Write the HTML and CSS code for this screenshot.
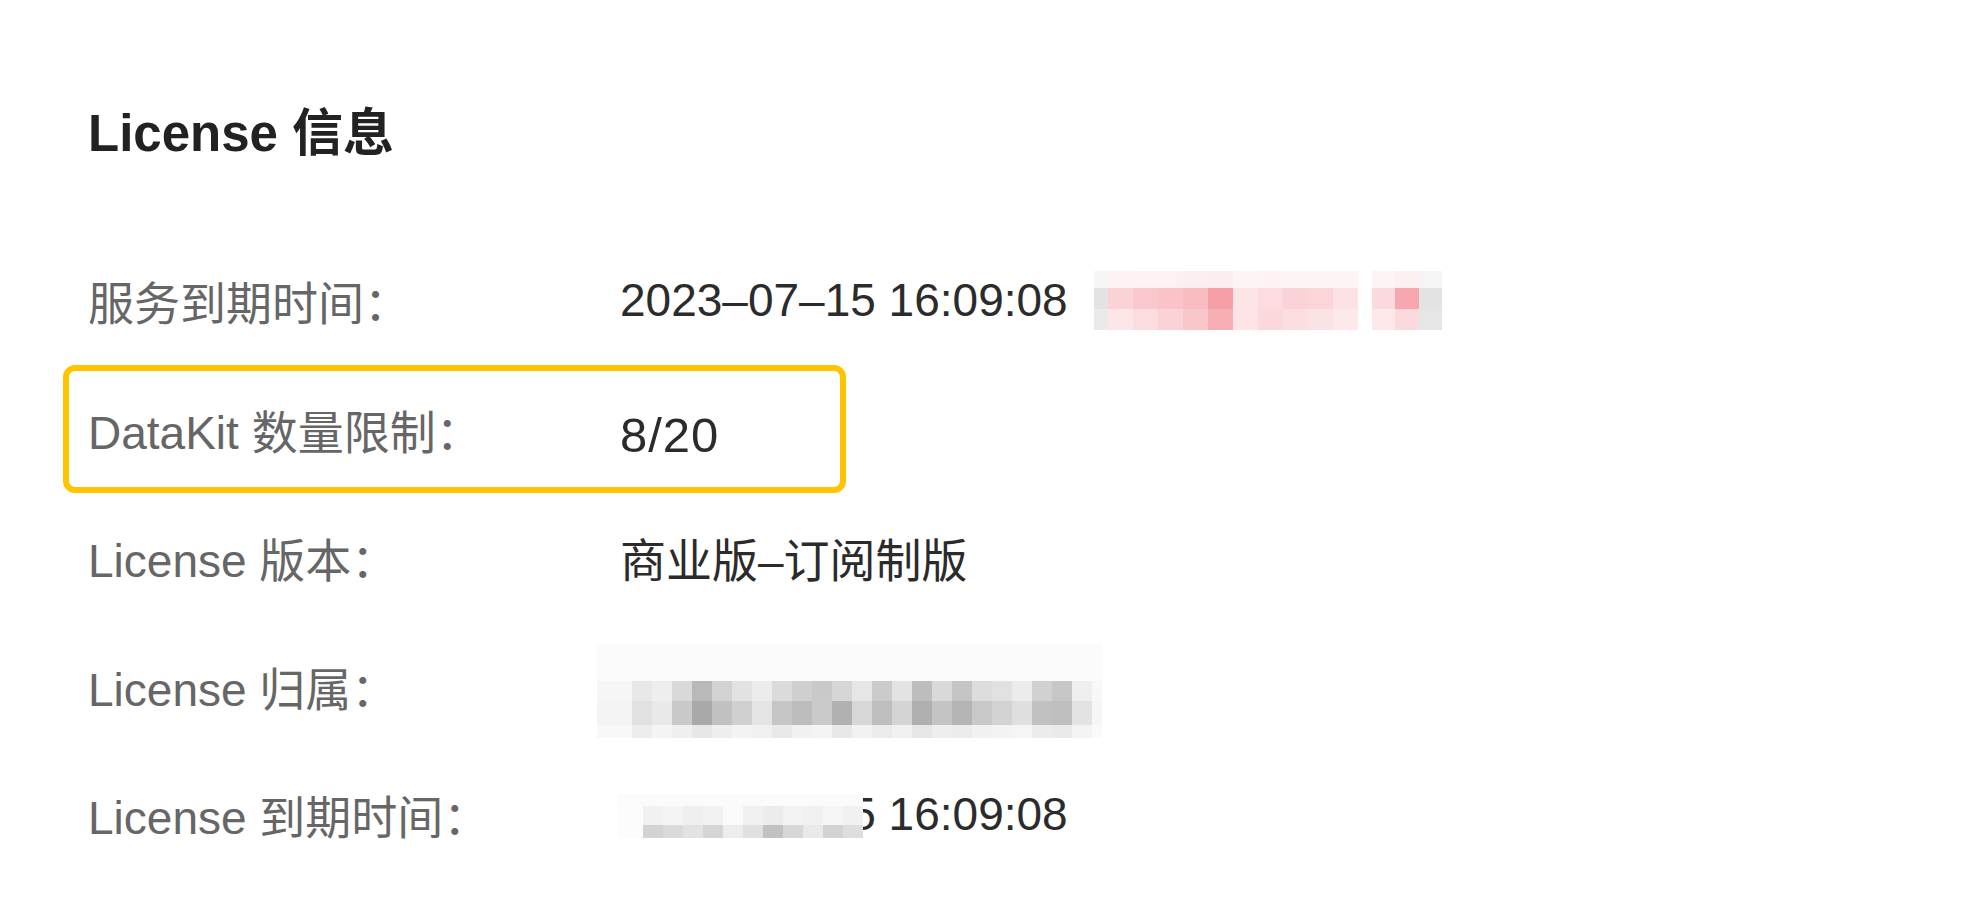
FILE: index.html
```html
<!DOCTYPE html>
<html lang="zh-CN">
<head>
    <meta charset="UTF-8">
    <meta name="viewport" content="width=device-width, initial-scale=1.0">
    <title>License 信息</title>
    <link rel="stylesheet" href="styles.css">
</head>
<body>
    <div class="license-panel">
        <h1 class="panel-title">License 信息</h1>

        <div class="info-row">
            <span class="info-label">服务到期时间：</span>
            <span class="info-value">
                2023–07–15 16:09:08
                <span class="mosaic mosaic-owner-tag" id="mosaicTag"></span>
            </span>
        </div>
        <div class="info-row highlighted">
            <span class="info-label">DataKit 数量限制：</span>
            <span class="info-value count">8/20</span>
        </div>
        <div class="info-row">
            <span class="info-label">License 版本：</span>
            <span class="info-value">商业版–订阅制版</span>
        </div>
        <div class="info-row">
            <span class="info-label">License 归属：</span>
            <span class="info-value">
                <span class="mosaic mosaic-owner" id="mosaicOwner"></span>
            </span>
        </div>
        <div class="info-row">
            <span class="info-label">License 到期时间：</span>
            <span class="info-value">
                2023–07–15 16:09:08
                <span class="mosaic mosaic-date" id="mosaicDate"></span>
            </span>
        </div>
    </div>

    <script>
        // blurred (pixelated) areas, one colour per cell, row by row
        const mosaics = {
            mosaicTag: [
                ['#f6f6f6','#fdf3f4','#fdf1f2','#fdf1f2','#fcefef','#fcedee','#fdf4f5','#fdf3f4','#fdf4f5','#fdf5f5','#fdf4f5','#ffffff','#fdf4f5','#fcf0f1','#f5f5f5'],
                ['#e4e2e2','#fbd3d6','#fac8cc','#f9c3c8','#f8bcc1','#f5a0a7','#fde4e6','#fcdcdf','#fbd2d5','#fbd5d8','#fde2e4','#ffffff','#fbdadd','#f6a8ae','#e3e3e3'],
                ['#ebe9e9','#fde6e8','#fbdde0','#fad3d6','#f9c6ca','#f7afb5','#fde3e5','#fbd8db','#fcdee0','#fbe2e4','#fde8ea','#ffffff','#fde8ea','#fbd9dc','#e6e6e6']
            ],
            mosaicOwner: [
                Array(25).fill('#fbfbfb'),
                ['#f6f6f6','#e8e8e8','#eeeeee','#d9d9d9','#b9b9b9','#d2d2d2','#e2e2e2','#ececec','#dbdbdb','#cfcfcf','#c9c9c9','#d6d6d6','#e6e6e6','#cbcbcb','#e3e3e3','#bdbdbd','#d9d9d9','#c5c5c5','#dddddd','#e1e1e1','#ececec','#d1d1d1','#c7c7c7','#efefef','#f8f8f8'],
                ['#f4f4f4','#e1e1e1','#e9e9e9','#c9c9c9','#a9a9a9','#c1c1c1','#d0d0d0','#e5e5e5','#c6c6c6','#bdbdbd','#cacaca','#b1b1b1','#d7d7d7','#bebebe','#d4d4d4','#afafaf','#c4c4c4','#b5b5b5','#c9c9c9','#d3d3d3','#dfdfdf','#c1c1c1','#bfbfbf','#e3e3e3','#f6f6f6'],
                ['#f8f8f8','#ededed','#f4f4f4','#efefef','#e7e7e7','#eeeeee','#f3f3f3','#f0f0f0','#e9e9e9','#f1f1f1','#f4f4f4','#e8e8e8','#f2f2f2','#ebebeb','#f0f0f0','#e6e6e6','#eeeeee','#ebebeb','#f1f1f1','#f3f3f3','#f5f5f5','#ececec','#eaeaea','#f4f4f4','#fafafa']
            ],
            mosaicDate: [
                Array(12).fill('#fbfbfb'),
                ['#fcfcfc','#f1f1f1','#f4f4f4','#efefef','#f2f2f2','#fafafa','#f0f0f0','#ececec','#f3f3f3','#f0f0f0','#f6f6f6','#f1f1f1'],
                ['#fcfcfc','#d3d3d3','#dadada','#e3e3e3','#d5d5d5','#ededed','#e0e0e0','#c2c2c2','#d8d8d8','#e9e9e9','#d3d3d3','#dedede']
            ]
        };

        Object.keys(mosaics).forEach(id => {
            const box = document.getElementById(id);
            mosaics[id].forEach(row => {
                row.forEach(color => {
                    const cell = document.createElement('span');
                    cell.style.background = color;
                    box.appendChild(cell);
                });
            });
        });
    </script>
</body>
</html>
```

FILE: styles.css
```css
body {
    margin: 0;
    background-color: #fff;
    font-family: "Liberation Sans", "Noto Sans CJK SC", sans-serif;
}
.license-panel {
    padding: 104px 0 0 63px;
}
.panel-title {
    margin: 0 0 72px;
    padding-left: 25px;
    font-size: 51px;
    line-height: 60px;
    font-weight: bold;
    color: #222;
}
.info-row {
    display: flex;
    align-items: center;
    box-sizing: border-box;
    width: 783px;
    height: 128.5px;
    padding-left: 19px;
    border: 6px solid transparent;
    border-radius: 12px;
    font-size: 46px;
}
.info-row.highlighted {
    border-color: #ffc300;
}
.info-label {
    width: 532px;
    flex-shrink: 0;
    color: #666;
}
.info-value {
    display: flex;
    align-items: center;
    position: relative;
    white-space: nowrap;
    color: #2b2b2b;
}
.info-value.count {
    padding-top: 12px;
    font-size: 49px;
    letter-spacing: 1px;
}
.mosaic {
    display: grid;
}
.mosaic-owner-tag {
    margin-left: 26px;
    grid-template-columns: 14px repeat(10, 25px) 14px 23px 24px 23px;
    grid-template-rows: 17px 21px 21px;
}
.mosaic-owner {
    margin-left: -23px;
    margin-top: 10px;
    grid-template-columns: 35px repeat(23, 20px) 10px;
    grid-template-rows: 37px 20px 24px 13px;
}
/* covers the first part of the date */
.mosaic-date {
    position: absolute;
    left: -2px;
    top: calc(50% - 20px);
    grid-template-columns: 25px repeat(11, 20px);
    grid-template-rows: 12px 19px 13px;
}
```
